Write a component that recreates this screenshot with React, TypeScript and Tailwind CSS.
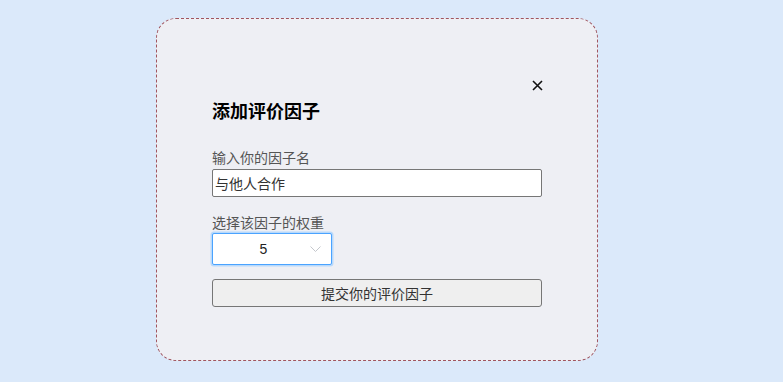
import React from "react";

export default function App() {
  const font = { fontFamily: '"Noto Sans CJK SC", "Noto Sans", sans-serif' };
  return (
    <div className="w-[783px] h-[382px] bg-[#dbe9fa] overflow-hidden" style={font}>
      <div className="ml-[156px] mt-[18px] w-[442px] h-[343px] rounded-[20px] border border-dashed border-[#a0555f] bg-[#eeeff4] px-[55px] pt-[61px] flex flex-col">
        <div className="flex justify-end pr-[0px] h-[10px]">
          <svg width="11" height="11" viewBox="0 0 11 11" className="mt-[0px] mr-[-1px]">
            <path d="M1 1 L10 10 M10 1 L1 10" stroke="#111" strokeWidth="1.6" />
          </svg>
        </div>
        <div className="mt-[8px] text-[18px] leading-[24px] font-bold text-black">添加评价因子</div>
        <div className="mt-[25px] text-[14px] leading-[20px] text-[#555]">输入你的因子名</div>
        <div className="mt-[2px] h-[28px] w-[330px] border border-[#767676] rounded-[2px] bg-white flex items-center px-[2px] text-[14px] text-[#333]">
          与他人合作
        </div>
        <div className="mt-[15px] text-[14px] leading-[20px] text-[#555]">选择该因子的权重</div>
        <div className="mt-[1px] h-[32px] w-[120px] border border-[#4aa3ff] rounded-[2px] bg-white shadow-[0_0_0_1.5px_#b8d9fb] flex items-center">
          <div className="flex-1 text-center text-[14px] text-[#222] pl-[4px]" style={{ fontFamily: '"Liberation Sans", Arial, sans-serif' }}>5</div>
          <svg width="11" height="7" viewBox="0 0 11 7" className="mr-[10px]">
            <path d="M0.5 0.5 L5.5 5.5 L10.5 0.5" stroke="#c4c7cc" strokeWidth="1" fill="none" />
          </svg>
        </div>
        <button className="mt-[14px] h-[28px] w-[330px] border border-[#767676] rounded-[3px] bg-[#efefef] text-[14px] text-[#333] flex items-center justify-center">
          提交你的评价因子
        </button>
      </div>
    </div>
  );
}
